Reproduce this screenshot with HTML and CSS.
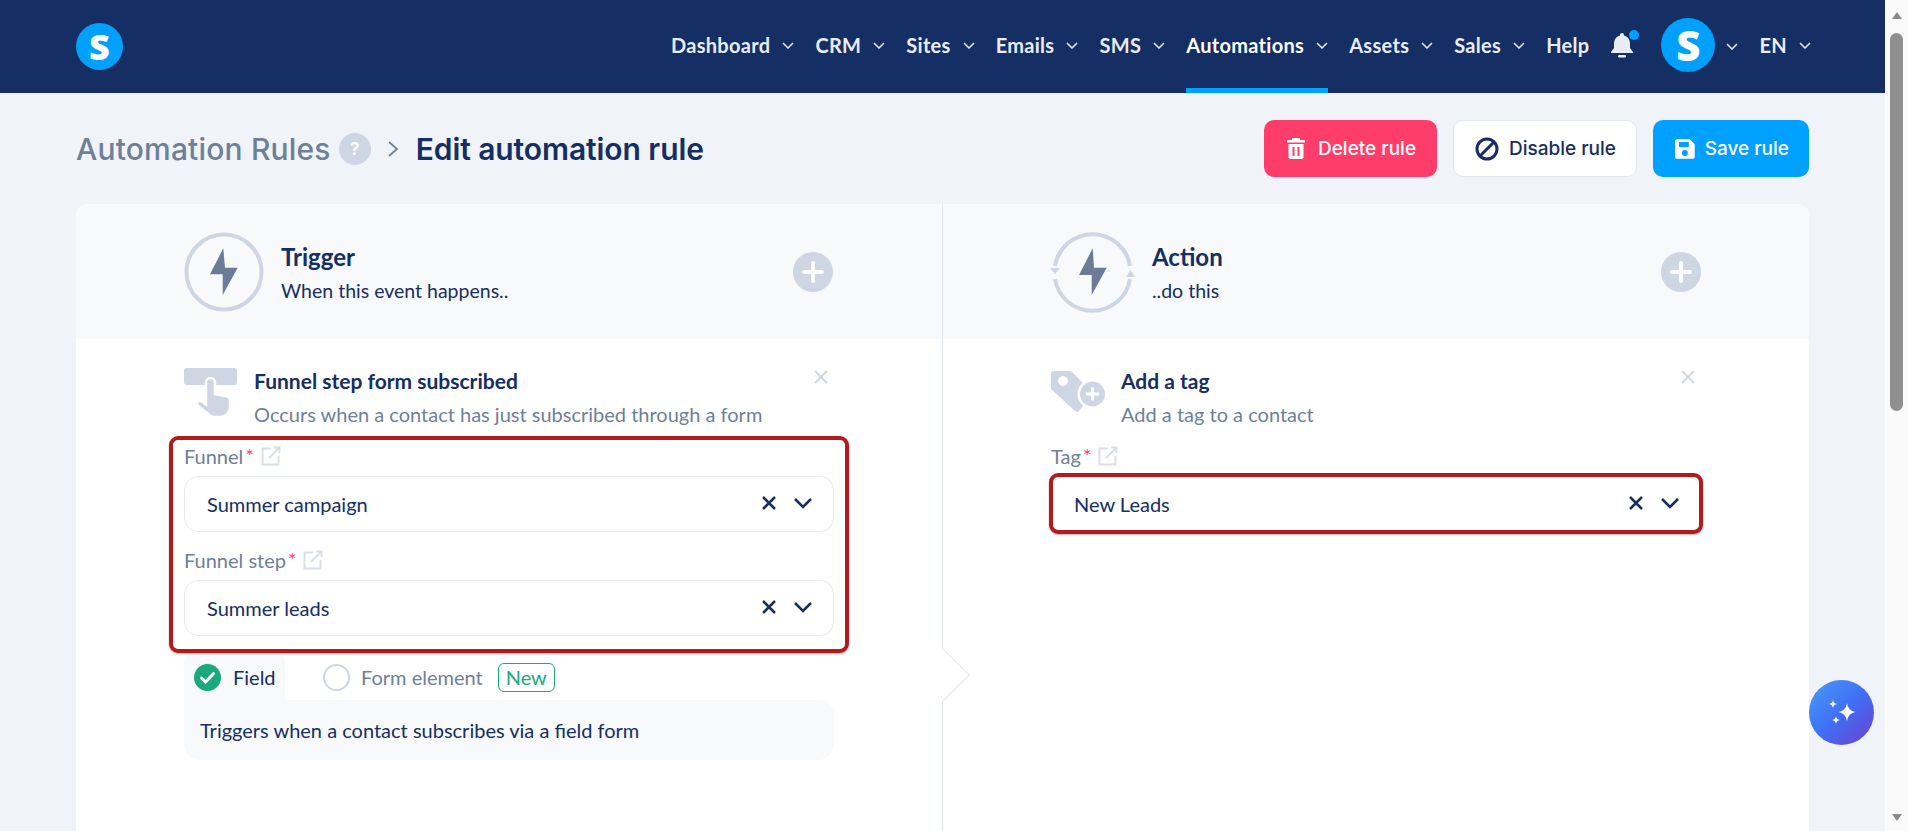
FILE: index.html
```html
<!DOCTYPE html>
<html lang="en">
<head>
  <meta charset="UTF-8">
  <meta name="viewport" content="width=device-width, initial-scale=1.0">
  <title>Edit automation rule</title>
  <link rel="stylesheet" href="styles.css">
</head>
<body>
  <div class="page">
    <!-- Top navigation -->
    <header class="topbar">
      <div class="logo">S</div>
      <nav class="nav">
        <a class="nav-item">Dashboard <svg class="nav-caret" viewBox="0 0 12 7"><path d="M1 1l5 5 5-5"/></svg></a>
        <a class="nav-item">CRM <svg class="nav-caret" viewBox="0 0 12 7"><path d="M1 1l5 5 5-5"/></svg></a>
        <a class="nav-item">Sites <svg class="nav-caret" viewBox="0 0 12 7"><path d="M1 1l5 5 5-5"/></svg></a>
        <a class="nav-item">Emails <svg class="nav-caret" viewBox="0 0 12 7"><path d="M1 1l5 5 5-5"/></svg></a>
        <a class="nav-item">SMS <svg class="nav-caret" viewBox="0 0 12 7"><path d="M1 1l5 5 5-5"/></svg></a>
        <a class="nav-item active">Automations <svg class="nav-caret" viewBox="0 0 12 7"><path d="M1 1l5 5 5-5"/></svg></a>
        <a class="nav-item">Assets <svg class="nav-caret" viewBox="0 0 12 7"><path d="M1 1l5 5 5-5"/></svg></a>
        <a class="nav-item">Sales <svg class="nav-caret" viewBox="0 0 12 7"><path d="M1 1l5 5 5-5"/></svg></a>
        <a class="nav-item">Help</a>
        <div class="bell">
          <svg viewBox="0 0 24 26" width="24" height="26"><path fill="#e8edf5" d="M12 1a2 2 0 0 1 2 2v.6c4 1 6 4.400 6 8.400v4l3 4v1H1v-1l3-4v-4c0-4 2-7.400 6-8.400V3a2 2 0 0 1 2-2z"/><rect x="8" y="23" width="8" height="2.500" rx="1.200" fill="#e8edf5"/></svg>
          <span class="bell-dot"></span>
        </div>
        <div class="avatar">S</div>
        <svg class="nav-caret avatar-caret" viewBox="0 0 12 7"><path d="M1 1l5 5 5-5"/></svg>
        <a class="nav-item lang">EN <svg class="nav-caret" viewBox="0 0 12 7"><path d="M1 1l5 5 5-5"/></svg></a>
      </nav>
    </header>

    <main class="content">
      <!-- Breadcrumb and actions -->
      <div class="toolbar">
        <div class="crumbs">
          <span class="crumb-parent">Automation Rules</span>
          <span class="help-dot">?</span>
          <svg class="crumb-sep" viewBox="0 0 10 16" width="10" height="16"><path d="M1 1l8 7-8 7"/></svg>
          <h1 class="crumb-current">Edit automation rule</h1>
        </div>
        <div class="actions">
          <button class="btn btn-delete">
            <svg viewBox="0 0 18 21" width="18" height="21"><path fill="#fff" d="M6 0h6a1 1 0 0 1 1 1v1h4a1 1 0 0 1 1 1v1.500H0V3a1 1 0 0 1 1-1h4V1a1 1 0 0 1 1-1zM1.500 6h15v13a2 2 0 0 1-2 2h-11a2 2 0 0 1-2-2zM5.500 9v9h2V9zm5 0v9h2V9z"/></svg>
            Delete rule
          </button>
          <button class="btn btn-disable">
            <svg viewBox="0 0 24 24" width="24" height="24"><circle cx="12" cy="12" r="10" fill="none" stroke="#152e63" stroke-width="3"/><path d="M5 19L19 5" stroke="#152e63" stroke-width="3"/></svg>
            Disable rule
          </button>
          <button class="btn btn-save">
            <svg viewBox="0 0 20 20" width="20" height="20"><path fill="#fff" d="M2 0h13l5 5v13a2 2 0 0 1-2 2H2a2 2 0 0 1-2-2V2a2 2 0 0 1 2-2zm2 3v5h10V3zm6 8a3 3 0 1 0 0 6 3 3 0 0 0 0-6z"/></svg>
            Save rule
          </button>
        </div>
      </div>

      <!-- Rule editor -->
      <section class="rule-card">
        <div class="rule-col rule-col-left">
          <div class="col-head">
            <svg class="head-icon" viewBox="0 0 80 80" width="80" height="80">
              <circle cx="40" cy="40" r="37.500" fill="none" stroke="#cdd6e2" stroke-width="4"/>
              <path fill="#6b7c97" d="M39.300 16.300L26 42.300h12.700V63l15-27.300H41z"/>
            </svg>
            <div class="head-text">
              <div class="head-title">Trigger</div>
              <div class="head-sub">When this event happens..</div>
            </div>
            <svg class="add-icon" viewBox="0 0 40 40" width="40" height="40"><circle cx="20" cy="20" r="20" fill="#cdd6e2"/><path d="M20 11v18M11 20h18" stroke="#fff" stroke-width="4" stroke-linecap="round"/></svg>
          </div>
          <div class="col-body">
            <div class="event">
              <svg class="event-icon" viewBox="0 0 53 50" width="53" height="50">
                <rect width="53" height="17" rx="3" fill="#cdd6e2"/>
                <path fill="#cdd6e2" stroke="#fff" stroke-width="2.500" d="M22 14.500a4.500 4.500 0 0 1 9 0V26l12 2.500a3.500 3.500 0 0 1 3 3.500v7a10 10 0 0 1-10 10H30a8 8 0 0 1-6-3L14 38a3 3 0 0 1 4-4.500l4 3z"/>
              </svg>
              <div class="event-text">
                <div class="event-title">Funnel step form subscribed</div>
                <div class="event-sub">Occurs when a contact has just subscribed through a form</div>
              </div>
              <svg class="event-close" viewBox="0 0 14 14" width="14" height="14"><path d="M1 1l12 12M13 1L1 13"/></svg>
            </div>

            <div class="fields marked">
              <div class="field">
                <div class="field-label">Funnel<span class="req">*</span>
                  <svg class="ext" viewBox="0 0 20 20" width="20" height="20"><path d="M17.500 10v8.500h-16v-16H10M13 1.500h5.500V7M18 2L8 12"/></svg>
                </div>
                <div class="select">
                  <span class="select-value">Summer campaign</span>
                  <svg class="sel-clear" viewBox="0 0 14 14" width="14" height="14"><path d="M1 1l12 12M13 1L1 13"/></svg>
                  <svg class="sel-caret" viewBox="0 0 18 11" width="18" height="11"><path d="M1 1l8 8 8-8"/></svg>
                </div>
              </div>
              <div class="field">
                <div class="field-label">Funnel step<span class="req">*</span>
                  <svg class="ext" viewBox="0 0 20 20" width="20" height="20"><path d="M17.500 10v8.500h-16v-16H10M13 1.500h5.500V7M18 2L8 12"/></svg>
                </div>
                <div class="select">
                  <span class="select-value">Summer leads</span>
                  <svg class="sel-clear" viewBox="0 0 14 14" width="14" height="14"><path d="M1 1l12 12M13 1L1 13"/></svg>
                  <svg class="sel-caret" viewBox="0 0 18 11" width="18" height="11"><path d="M1 1l8 8 8-8"/></svg>
                </div>
              </div>
            </div>

            <div class="tabs">
              <div class="tab tab-on">
                <svg viewBox="0 0 27 27" width="27" height="27"><circle cx="13.500" cy="13.500" r="13.500" fill="#1ba97c"/><path d="M7.500 14l4 4 8-8.500" fill="none" stroke="#fff" stroke-width="3" stroke-linecap="round"/></svg>
                Field
              </div>
              <div class="tab tab-off">
                <span class="radio"></span>
                Form element
                <span class="badge">New</span>
              </div>
            </div>
            <div class="tab-panel">Triggers when a contact subscribes via a field form</div>
          </div>
          <span class="notch"></span>
        </div>

        <div class="rule-col rule-col-right">
          <div class="col-head">
            <svg class="head-icon head-icon-wide" viewBox="0 0 84 80" width="84" height="80">
              <path fill="none" stroke="#cdd6e2" stroke-width="4" d="M4 34A38 38 0 0 1 79 34M4 47A38 38 0 0 0 79 47"/>
              <path fill="#cdd6e2" d="M-1 36h10l-5 6zM75 45l4.500-7 4.500 7z"/>
              <path fill="#6b7c97" d="M41.700 16.300L28 43h12.700v20l15-27.300H43z"/>
            </svg>
            <div class="head-text">
              <div class="head-title">Action</div>
              <div class="head-sub">..do this</div>
            </div>
            <svg class="add-icon" viewBox="0 0 40 40" width="40" height="40"><circle cx="20" cy="20" r="20" fill="#cdd6e2"/><path d="M20 11v18M11 20h18" stroke="#fff" stroke-width="4" stroke-linecap="round"/></svg>
          </div>
          <div class="col-body">
            <div class="event">
              <svg class="event-icon" viewBox="0 0 54 50" width="54" height="50">
                <path fill="#cdd6e2" fill-rule="evenodd" d="M3 3h16a3 3 0 0 1 2 1l21 21-14 18a3 3 0 0 1-4 0L1 22a3 3 0 0 1-1-2V6a3 3 0 0 1 3-3zm9 5a5 5 0 1 0 0 10 5 5 0 0 0 0-10z"/>
                <circle cx="41.500" cy="26" r="15" fill="#fff"/>
                <circle cx="41.500" cy="26" r="12.500" fill="#cdd6e2"/>
                <path d="M41.500 19.500v13M35 26h13" stroke="#fff" stroke-width="3"/>
              </svg>
              <div class="event-text event-text-right">
                <div class="event-title">Add a tag</div>
                <div class="event-sub">Add a tag to a contact</div>
              </div>
              <svg class="event-close" viewBox="0 0 14 14" width="14" height="14"><path d="M1 1l12 12M13 1L1 13"/></svg>
            </div>

            <div class="field">
              <div class="field-label">Tag<span class="req">*</span>
                <svg class="ext" viewBox="0 0 20 20" width="20" height="20"><path d="M17.500 10v8.500h-16v-16H10M13 1.500h5.500V7M18 2L8 12"/></svg>
              </div>
              <div class="select marked marked-tight">
                <span class="select-value">New Leads</span>
                <svg class="sel-clear" viewBox="0 0 14 14" width="14" height="14"><path d="M1 1l12 12M13 1L1 13"/></svg>
                <svg class="sel-caret" viewBox="0 0 18 11" width="18" height="11"><path d="M1 1l8 8 8-8"/></svg>
              </div>
            </div>
          </div>
        </div>
      </section>
    </main>
  </div>

  <!-- Browser scrollbar as captured -->
  <div class="scrollbar">
    <span class="scroll-up"></span>
    <span class="scroll-thumb"></span>
    <span class="scroll-down"></span>
  </div>

  <button class="fab">
    <svg viewBox="0 0 34 34" width="34" height="34"><path fill="#fff" d="M22 7c.8 5 3.500 8 8.500 9-5 1-7.700 4-8.500 9.500-.8-5.500-3.500-8.500-8.500-9.500 5-1 7.700-4 8.500-9zM8 4c.4 2.500 1.500 3.700 4 4-2.500.4-3.600 1.500-4 4-.4-2.500-1.500-3.600-4-4 2.500-.3 3.600-1.500 4-4zM11 20c.4 2.500 1.500 3.700 4 4-2.500.4-3.600 1.500-4 4-.4-2.500-1.500-3.600-4-4 2.500-.3 3.600-1.500 4-4z"/></svg>
  </button>
</body>
</html>
```

FILE: styles.css
```css
/* General Styles */
* {
  box-sizing: border-box;
}

body {
  font-family: "Lato", "Liberation Sans", sans-serif;
  background-color: #f0f4f9;
  color: #152e63;
  margin: 0;
  height: 831px;
  display: flex;
  overflow: hidden;
}

.page {
  flex: 1;
  min-width: 0;
  display: flex;
  flex-direction: column;
}

/* Top navigation */
.topbar {
  height: 93px;
  flex-shrink: 0;
  background-color: #152e63;
  display: flex;
  align-items: center;
  justify-content: space-between;
  padding: 0 74px 0 76px;
}

.logo {
  width: 47px;
  height: 47px;
  border-radius: 50%;
  background-color: #00a0ff;
  color: #fff;
  font: 800 36px/47px "Open Sans", sans-serif;
  text-align: center;
}

.nav {
  display: flex;
  align-items: center;
  height: 100%;
  gap: 21px;
}

.nav-item {
  height: 100%;
  display: flex;
  align-items: center;
  gap: 12px;
  color: #e8edf5;
  font-size: 20px;
  font-weight: 700;
  letter-spacing: 0.3px;
  border-bottom: 5px solid transparent;
  padding-top: 2px;
}

.nav-item.active {
  color: #fff;
  border-bottom-color: #00a0ff;
}

.nav-caret {
  width: 12px;
  height: 7px;
  fill: none;
  stroke: #e8edf5;
  stroke-width: 1.5;
}

.bell {
  position: relative;
  width: 24px;
  height: 26px;
  margin-bottom: 4px;
}

.bell-dot {
  position: absolute;
  top: -2px;
  right: -5px;
  width: 10px;
  height: 10px;
  border-radius: 50%;
  background-color: #00a0ff;
}

.avatar {
  width: 54px;
  height: 54px;
  border-radius: 50%;
  background-color: #00a0ff;
  color: #fff;
  font: 800 42px/54px "Open Sans", sans-serif;
  text-align: center;
  margin-left: 6px;
  margin-bottom: 4px;
}

.avatar-caret {
  margin-left: -10px;
}

/* Breadcrumb and actions */
.content {
  flex: 1;
  min-height: 0;
  padding: 27px 76px 0;
  display: flex;
  flex-direction: column;
  gap: 27px;
}

.toolbar {
  display: flex;
  justify-content: space-between;
  align-items: center;
  height: 57px;
}

.crumbs {
  display: flex;
  align-items: center;
}

.crumb-parent {
  font: 500 30px "Inter", sans-serif;
  letter-spacing: 0.18px;
  color: #6f7f97;
}

.help-dot {
  width: 32px;
  height: 32px;
  border-radius: 50%;
  background-color: #cdd6e2;
  color: #fff;
  font: 700 17px/32px "Inter", sans-serif;
  text-align: center;
  margin-left: 8px;
}

.crumb-sep {
  fill: none;
  stroke: #6f7f97;
  stroke-width: 1.8;
  margin: 0 18px 0 17px;
}

.crumb-current {
  font: 600 30px "Inter", sans-serif;
  letter-spacing: -0.08px;
  margin: 0;
}

.actions {
  display: flex;
  gap: 16px;
}

.btn {
  height: 57px;
  display: flex;
  align-items: center;
  gap: 13px;
  border: none;
  border-radius: 10px;
  font: 500 19px "Inter", sans-serif;
  white-space: nowrap;
  padding: 0 20px;
}

.btn-delete {
  width: 173px;
  background-color: #ff3d6b;
  color: #fff;
  padding-left: 23px;
}

.btn-disable {
  width: 184px;
  background-color: #fff;
  color: #152e63;
  border: 1px solid #e3e8ef;
  padding-left: 21px;
  gap: 10px;
}

.btn-save {
  width: 156px;
  background-color: #00a0ff;
  color: #fff;
  padding-left: 22px;
  gap: 10px;
}

/* Rule editor */
.rule-card {
  flex: 1;
  min-height: 0;
  display: grid;
  grid-template-columns: 867px 1fr;
  background-color: #fff;
  border-radius: 12px 12px 0 0;
}

.rule-col {
  position: relative;
  display: flex;
  flex-direction: column;
}

.rule-col-left {
  border-right: 1px solid #e3e8ef;
}

.col-head {
  height: 135px;
  display: flex;
  align-items: center;
  background-color: #f8f9fb;
  padding: 0 108px;
}

.rule-col-left .col-head {
  border-radius: 12px 0 0 0;
  padding-right: 109px;
}

.rule-col-right .col-head {
  border-radius: 0 12px 0 0;
  padding-left: 108px;
}

.head-icon {
  flex-shrink: 0;
  margin-right: 17px;
  overflow: visible;
}

.head-icon-wide {
  margin-right: 17px;
}

.head-text {
  flex: 1;
  padding-top: 4px;
}

.head-title {
  font-size: 24px;
  font-weight: 700;
  line-height: 28px;
}

.head-sub {
  font-size: 19.5px;
  line-height: 28px;
  margin-top: 6px;
}

.col-body {
  padding: 29px 108px 0 108px;
}

.rule-col-right .col-body {
  padding: 29px 108px 0 108px;
}

.event {
  display: flex;
  align-items: flex-start;
  height: 74px;
}

.event-icon {
  flex-shrink: 0;
}

.event-text {
  flex: 1;
  margin: -2px 0 0 17px;
}

.event-text-right {
  margin-left: 16px;
}

.event-title {
  font-size: 21px;
  font-weight: 700;
  line-height: 30px;
}

.event-sub {
  font-size: 20px;
  line-height: 28px;
  color: #6f7f97;
  margin-top: 4px;
}

.event-close {
  fill: none;
  stroke: #cdd6e2;
  stroke-width: 2;
  margin: 2px 6px 0 0;
}

/* Form fields */
.field-label {
  display: flex;
  align-items: center;
  height: 28px;
  font-size: 20px;
  color: #6f7f97;
}

.req {
  color: #ff3d6b;
  font-size: 20px;
  align-self: flex-start;
  margin: 1px 0 0 2px;
}

.ext {
  fill: none;
  stroke: #d8dfe8;
  stroke-width: 2;
  margin-left: 7px;
}

.select {
  height: 56px;
  display: flex;
  align-items: center;
  background-color: #fff;
  border: 1px solid #e6eaf0;
  border-radius: 14px;
  padding: 0 21px 0 22px;
  margin-top: 6px;
}

.select-value {
  flex: 1;
  font-size: 20px;
}

.sel-clear {
  fill: none;
  stroke: #152e63;
  stroke-width: 2.5;
  margin: -2px 18px 0 0;
}

.sel-caret {
  fill: none;
  stroke: #152e63;
  stroke-width: 2.5;
  margin-top: -2px;
}

.fields {
  display: flex;
  flex-direction: column;
  gap: 14px;
}

/* Red annotation frame */
.marked {
  position: relative;
}

.marked::after {
  content: "";
  position: absolute;
  top: -6px;
  right: -15px;
  bottom: -17px;
  left: -15px;
  border: 4px solid #b01c1e;
  border-radius: 9px;
  box-shadow: 0 1px 2px rgba(0, 0, 0, 0.3);
}

.marked-tight::after {
  top: -4px;
  right: -3px;
  bottom: -3px;
  left: -3px;
}

/* Trigger tabs */
.tabs {
  display: flex;
  margin-top: 18px;
  height: 46px;
}

.tab {
  display: flex;
  align-items: center;
  font-size: 20px;
}

.tab-on {
  width: 101px;
  background-color: #f8f9fb;
  border-radius: 8px 8px 0 0;
  padding-left: 10px;
  gap: 12px;
}

.tab-off {
  margin-left: 38px;
  gap: 11px;
  color: #6f7f97;
}

.radio {
  width: 27px;
  height: 27px;
  border-radius: 50%;
  border: 2px solid #cdd6e2;
}

.badge {
  height: 29px;
  line-height: 26px;
  padding: 0 7px;
  border: 1px solid #1ba97c;
  border-radius: 6px;
  color: #1ba97c;
  margin-left: 4px;
}

.tab-panel {
  height: 60px;
  line-height: 60px;
  background-color: #f8f9fb;
  border-radius: 0 16px 16px 16px;
  padding-left: 16px;
  font-size: 20px;
}

/* Arrow on the divider */
.notch {
  position: absolute;
  top: 452px;
  right: -20px;
  width: 38px;
  height: 38px;
  background-color: #fff;
  border-top: 1px solid #e3e8ef;
  border-right: 1px solid #e3e8ef;
  transform: rotate(45deg);
}

/* Scrollbar */
.scrollbar {
  width: 23px;
  flex-shrink: 0;
  background-color: #fafafa;
  position: relative;
  display: flex;
  flex-direction: column;
  align-items: center;
}

.scroll-up {
  margin-top: 12px;
  border-left: 5px solid transparent;
  border-right: 5px solid transparent;
  border-bottom: 7px solid #8a8a8a;
}

.scroll-thumb {
  width: 13px;
  height: 378px;
  margin-top: 14px;
  border-radius: 7px;
  background-color: #8f8f8f;
}

.scroll-down {
  margin-top: auto;
  margin-bottom: 10px;
  border-left: 5px solid transparent;
  border-right: 5px solid transparent;
  border-top: 7px solid #8a8a8a;
}

/* Floating assistant button */
.fab {
  position: fixed;
  left: 1809px;
  top: 680px;
  width: 65px;
  height: 65px;
  border: none;
  border-radius: 50%;
  padding: 0;
  background: linear-gradient(135deg, #4a9cf5 0%, #3f6ff5 50%, #6f3fd0 100%);
  display: flex;
  align-items: center;
  justify-content: center;
}
```
